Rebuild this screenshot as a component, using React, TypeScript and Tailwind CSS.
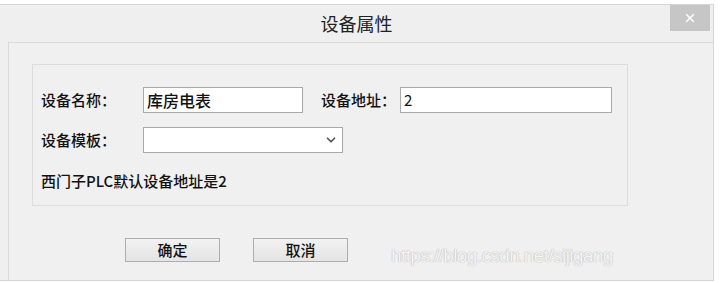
import { ChevronDown, X } from "lucide-react";

const font = { fontFamily: '"Noto Sans CJK SC", "Liberation Sans", sans-serif' };

export default function App() {
  return (
    <div className="h-[283px] w-[720px] overflow-hidden bg-white pt-[4px]" style={font}>
      <div className="flex h-[277px] w-[714px] flex-col border-t border-r border-b border-[#d6d6d6] bg-[#efefef]">
        {/* title bar */}
        <div className="relative flex h-[37px] items-center justify-center">
          <span className="text-[18px] text-[#222]">设备属性</span>
          <div className="absolute top-0 right-[3px] flex h-[26px] w-[40px] items-center justify-center bg-[#c6c6c6]">
            <X size={14} strokeWidth={2.5} className="text-white" />
          </div>
        </div>

        {/* body */}
        <div className="ml-[8px] flex flex-1 flex-col border-t border-l border-[#dadada] bg-[#f0f0f1] pl-[23px] pt-[21px]">
          <div className="flex h-[142px] w-[596px] flex-col border border-[#dddddd] pl-[8px] pt-[22px]">
            <div className="flex h-[26px] items-center">
              <span className="w-[102px] text-[15px] font-medium text-[#111]">设备名称：</span>
              <div className="flex h-[26px] w-[160px] items-center border border-[#a9a9a9] bg-white pl-[3px] text-[16px] font-medium text-[#111]">
                库房电表
              </div>
              <span className="ml-[18px] w-[79px] text-[15px] font-medium text-[#111]">设备地址：</span>
              <div className="flex h-[26px] w-[212px] items-center border border-[#a9a9a9] bg-white pl-[3px] text-[15px] text-[#111]">
                2
              </div>
            </div>
            <div className="mt-[14px] flex h-[26px] items-center">
              <span className="w-[102px] text-[15px] font-medium text-[#111]">设备模板：</span>
              <div className="flex h-[26px] w-[200px] items-center justify-end border border-[#a9a9a9] bg-white pr-[4px]">
                <ChevronDown size={14} strokeWidth={3} className="text-[#555]" />
              </div>
            </div>
            <div className="mt-[17px] text-[15px] font-medium text-[#111]">西门子PLC默认设备地址是2</div>
          </div>

          <div className="mt-[24px] flex items-center">
            <div className="ml-[93px] flex h-[24px] w-[95px] items-center justify-center border border-[#adadad] bg-gradient-to-b from-[#f2f2f2] to-[#e4e4e4] text-[15px] font-medium text-[#111]">
              确定
            </div>
            <div className="ml-[33px] flex h-[24px] w-[95px] items-center justify-center border border-[#adadad] bg-gradient-to-b from-[#f2f2f2] to-[#e4e4e4] text-[15px] font-medium text-[#111]">
              取消
            </div>
            <span
              className="ml-[43px] mt-[12px] text-[19px] tracking-[-0.6px] text-[#f4f4f4]"
              style={{ fontFamily: '"Liberation Sans", sans-serif', textShadow: "0 0 1px #b8b8b8, 0 0 1px #b8b8b8" }}
            >
              https://blog.csdn.net/sijigang
            </span>
          </div>
        </div>
      </div>
    </div>
  );
}
